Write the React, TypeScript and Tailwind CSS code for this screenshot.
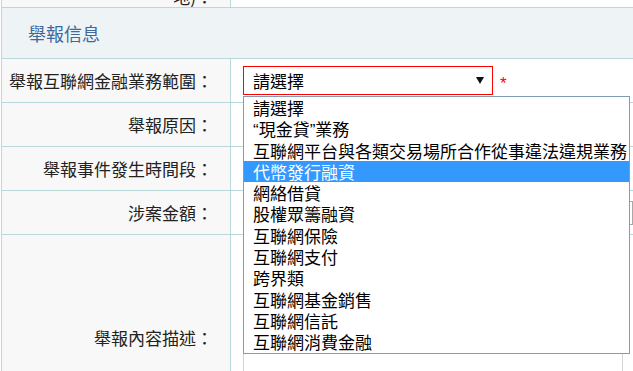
import React from "react";

const Q = ({ c }: { c: string }) => (
  <span className="font-['Liberation_Sans',sans-serif]">{c}</span>
);

const options: React.ReactNode[] = [
  "請選擇",
  <>
    <Q c="“" />
    現金貸
    <Q c="”" />
    業務
  </>,
  "互聯網平台與各類交易場所合作從事違法違規業務",
  "代幣發行融資",
  "網絡借貸",
  "股權眾籌融資",
  "互聯網保險",
  "互聯網支付",
  "跨界類",
  "互聯網基金銷售",
  "互聯網信託",
  "互聯網消費金融",
];

const Row = ({
  label,
  height,
  children,
}: {
  label: string;
  height: string;
  children?: React.ReactNode;
}) => (
  <div className={`flex border-b border-[#b8d8da] ${height}`}>
    <div className="flex w-[229px] shrink-0 items-center justify-end border-r border-[#b8d8da] bg-[#f8f8f8] pr-[17px] text-[17px] text-[#222]">
      {label}
    </div>
    <div className="relative flex-1 bg-white pl-[12px]">{children}</div>
  </div>
);

const App = () => {
  return (
    <div className="relative h-[371px] w-[633px] overflow-hidden bg-white font-['Noto_Sans_CJK_TC','Noto_Sans_CJK_SC',sans-serif]">
      <div className="ml-px border-l border-[#b8d8da]">
        {/* cut-off row above */}
        <div className="flex h-[8px] border-b border-[#b8d8da]">
          <div className="flex w-[229px] shrink-0 items-end justify-end overflow-hidden border-r border-[#b8d8da] bg-[#f8f8f8] pr-[17px] text-right text-[17px] leading-[20px] text-[#222]">
            <span className="whitespace-nowrap">
              聯系地址(所在
              <br />
              地)：
            </span>
          </div>
          <div className="flex-1 bg-white" />
        </div>

        <div className="flex h-[51px] items-center border-b border-[#b8d8da] bg-[#eef3f6] pl-[26px] text-[18px] text-[#3d6a9e]">
          舉報信息
        </div>

        <Row label="舉報互聯網金融業務範圍：" height="h-[44px]">
          <div className="flex h-full items-center">
            <div className="flex h-[29px] w-[250px] items-center justify-between border border-[#ff0000] bg-white pl-[9px] pr-[8px] text-[17px] text-black">
              <span>請選擇</span>
              <svg width="8" height="7" viewBox="0 0 8 7">
                <path d="M0 0 H8 L4 7 Z" fill="#111" />
              </svg>
            </div>
            <span className="ml-[7px] mt-[6px] font-['Liberation_Sans',sans-serif] text-[17px] leading-none text-[#ff0000]">
              *
            </span>
          </div>
        </Row>

        <Row label="舉報原因：" height="h-[44px]" />
        <Row label="舉報事件發生時間段：" height="h-[44px]" />
        <Row label="涉案金額：" height="h-[44px]">
          <div className="flex h-full items-center">
            <div className="h-[24px] w-[390px] border border-[#a9a9a9] bg-white" />
          </div>
        </Row>
        <Row label="舉報內容描述：" height="h-[206px]">
          <div className="pt-[10px]">
            <div className="h-[180px] w-[380px] border border-[#d4d4d4] bg-white" />
          </div>
        </Row>
      </div>

      {/* open dropdown list */}
      <div className="absolute left-[243px] top-[96px] w-[387px] border border-[#7f9db9] bg-white text-[17px] text-black">
        {options.map((o, i) => (
          <div
            key={i}
            className={`h-[21.3px] whitespace-nowrap pl-[9px] leading-[21.3px] ${
              i === 3 ? "bg-[#3399ff] text-white" : ""
            }`}
          >
            {o}
          </div>
        ))}
      </div>
    </div>
  );
};

export default App;
